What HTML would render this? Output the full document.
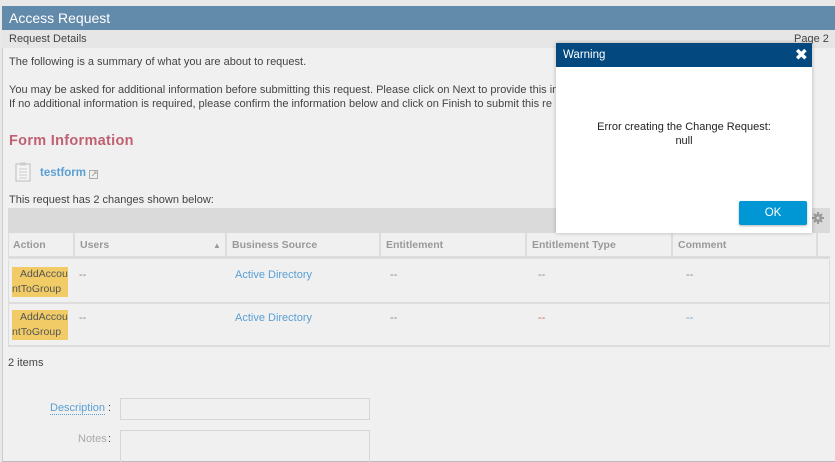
<!DOCTYPE html>
<html><head><style>
*{margin:0;padding:0;box-sizing:border-box}
body{width:835px;height:462px;overflow:hidden;background:#e8e8e8;font-family:"Liberation Sans","DejaVu Sans",sans-serif;font-size:11px;color:#444;position:relative}
.abs{position:absolute}
.page{left:2px;top:6px;width:833px;height:456px;background:#f0f0f0;border-left:1px solid #ccc;border-bottom:1px solid #bbb}
.hdr{left:2px;top:6px;width:833px;height:24px;background:#628aab;color:#fff;font-size:14px;line-height:24px;padding-left:7px}
.sub{left:2px;top:30px;width:833px;height:18px;background:#e6e6e6;line-height:19px;padding-left:7px;font-size:11px}
.t{white-space:nowrap}
.th{top:233px;height:25px;line-height:25px;color:#999;font-weight:bold;font-size:10.5px;border-right:2px solid #ddd;padding-left:5px}
.row{left:8px;width:822px;border-bottom:2px solid #ddd}
.tag{background:#f1cc66;color:#555;width:56px;line-height:15px;font-size:10.5px}
.dash{color:#888}
.lnk{color:#5a9fd4}
</style></head><body>
<div class="abs page"></div>
<div class="abs hdr">Access Request</div>
<div class="abs sub">Request Details<span style="position:absolute;left:792px">Page 2 o</span></div>
<div class="abs t" style="left:9px;top:56px">The following is a summary of what you are about to request.</div>
<div class="abs t" style="left:9px;top:84px">You may be asked for additional information before submitting this request. Please click on Next to provide this in</div>
<div class="abs t" style="left:9px;top:98px">If no additional information is required, please confirm the information below and click on Finish to submit this re</div>
<div class="abs t" style="left:9px;top:133px;font-size:14.5px;color:#c06070;font-weight:bold;letter-spacing:.3px">Form Information</div>
<svg class="abs" style="left:15px;top:162px" width="17" height="20"><rect x="1" y="2" width="14" height="17" fill="#f4f4f4" stroke="#bbb"/><rect x="5" y="0.5" width="6" height="3" fill="#ccc"/><path d="M4 7h8M4 10h8M4 13h8M4 16h8" stroke="#ccc"/></svg>
<div class="abs t" style="left:40px;top:167px;font-weight:bold;color:#5a9fd4;font-size:11.5px">testform</div>
<svg class="abs" style="left:89px;top:170px" width="9" height="9"><rect x="0.5" y="0.5" width="8" height="8" fill="none" stroke="#aaa"/><path d="M3 6l4-4M5 2h2v2" stroke="#aaa" fill="none"/></svg>
<div class="abs t" style="left:9px;top:194px">This request has 2 changes shown below:</div>
<div class="abs" style="left:8px;top:208px;width:822px;height:25px;background:#dadada"></div>
<svg class="abs" style="left:812px;top:212px" width="12" height="12"><path d="M6 0v12M0 6h12M2 2l8 8M10 2l-8 8" stroke="#999" stroke-width="2"/><circle cx="6" cy="6" r="4" fill="#999"/><circle cx="6" cy="6" r="1.5" fill="#dadada"/></svg>
<div class="abs" style="left:8px;top:233px;width:822px;height:26px;border-bottom:3px solid #ddd;border-left:1px solid #ddd"></div>
<div class="abs th" style="left:8px;width:67px">Action</div>
<div class="abs th" style="left:75px;width:152px">Users<span style="position:absolute;left:138px;top:0;font-size:8px;color:#999">▲</span></div>
<div class="abs th" style="left:227px;width:154px">Business Source</div>
<div class="abs th" style="left:381px;width:146px">Entitlement</div>
<div class="abs th" style="left:527px;width:146px">Entitlement Type</div>
<div class="abs th" style="left:673px;width:145px">Comment</div>
<div class="abs row" style="top:260px;height:44px;border-left:1px solid #ddd;border-right:1px solid #ddd"></div>
<div class="abs row" style="top:304px;height:43px;border-left:1px solid #ddd;border-right:1px solid #ddd"></div>
<div class="abs tag" style="left:12px;top:267px;padding-left:8px">AddAccou</div><div class="abs tag" style="left:12px;top:282px">ntToGroup</div>
<div class="abs tag" style="left:12px;top:310px;padding-left:8px">AddAccou</div><div class="abs tag" style="left:12px;top:325px">ntToGroup</div>
<div class="abs dash" style="left:79px;top:269px">--</div><div class="abs dash" style="left:79px;top:312px">--</div>
<div class="abs lnk t" style="left:235px;top:269px">Active Directory</div><div class="abs lnk t" style="left:235px;top:312px">Active Directory</div>
<div class="abs dash" style="left:390px;top:269px">--</div><div class="abs dash" style="left:390px;top:312px">--</div>
<div class="abs dash" style="left:538px;top:269px">--</div><div class="abs" style="left:538px;top:312px;color:#c66">--</div>
<div class="abs dash" style="left:686px;top:269px">--</div><div class="abs" style="left:686px;top:312px;color:#6a9fd4">--</div>
<div class="abs" style="left:8px;top:357px">2 items</div>
<div class="abs t lnk" style="left:50px;top:402px;border-bottom:1px dotted #5a9fd4">Description</div><div class="abs" style="left:108px;top:402px">:</div>
<div class="abs" style="left:120px;top:398px;width:250px;height:22px;border:1px solid #d6d6d6"></div>
<div class="abs t" style="left:78px;top:433px;color:#aaa">Notes</div><div class="abs" style="left:108px;top:433px">:</div>
<div class="abs" style="left:120px;top:430px;width:250px;height:32px;border:1px solid #d6d6d6;border-bottom:none"></div>
<div class="abs" style="left:556px;top:43px;width:256px;height:190px;background:#fff;box-shadow:0 0 4px rgba(0,0,0,.25)"></div>
<div class="abs" style="left:556px;top:43px;width:256px;height:24px;background:#03497f;color:#fff;font-size:11.5px;line-height:25px;padding-left:7px">Warning<span style="position:absolute;right:4px;top:0;font-size:16px;font-weight:bold">✖</span></div>
<div class="abs t" style="left:556px;top:120px;width:256px;text-align:center;color:#222;line-height:14px">Error creating the Change Request:<br>null</div>
<div class="abs" style="left:739px;top:201px;width:68px;height:24px;background:#0097d4;color:#fff;text-align:center;line-height:24px;font-size:11.5px;border-radius:2px;box-shadow:0 1px 2px rgba(0,0,0,.3)">OK</div>
</body></html>
